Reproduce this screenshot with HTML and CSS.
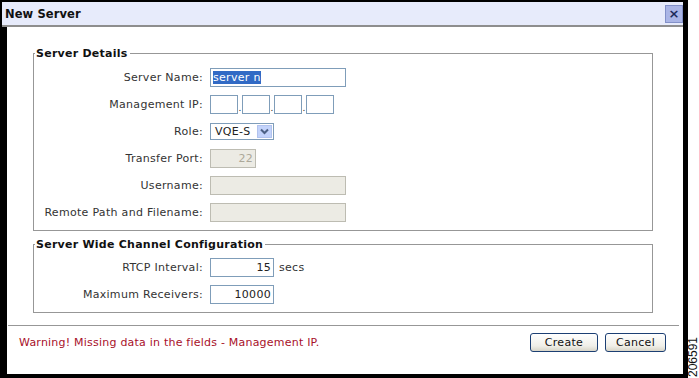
FILE: index.html
```html
<!DOCTYPE html>
<html lang="en">

<head>
    <meta charset="UTF-8">
    <title>New Server</title>
    <link rel="stylesheet" href="styles.css">
</head>

<body>
    <div class="dialog">
        <div class="titlebar">
            <span class="title">New Server</span>
            <span class="close-btn">&times;</span>
        </div>

        <div class="content">
            <!-- Server details -->
            <fieldset class="group details">
                <legend>Server Details</legend>
                <div class="form-grid">
                    <label>Server Name:</label>
                    <div class="field"><span class="input wide"><span class="selected">server n</span></span></div>

                    <label>Management IP:</label>
                    <div class="field ip">
                        <span class="input octet"></span><span class="dot">.</span>
                        <span class="input octet"></span><span class="dot">.</span>
                        <span class="input octet"></span><span class="dot">.</span>
                        <span class="input octet"></span>
                    </div>

                    <label>Role:</label>
                    <div class="field">
                        <span class="select">
                            <span class="select-value">VQE-S</span>
                            <span class="select-arrow">
                                <svg width="9" height="7" viewBox="0 0 9 7">
                                    <path d="M1 1.5 L4.5 5 L8 1.5" fill="none" stroke="#4d6185" stroke-width="2"/>
                                </svg>
                            </span>
                        </span>
                    </div>

                    <label>Transfer Port:</label>
                    <div class="field"><span class="input disabled port">22</span></div>

                    <label>Username:</label>
                    <div class="field"><span class="input disabled wide"></span></div>

                    <label>Remote Path and Filename:</label>
                    <div class="field"><span class="input disabled wide"></span></div>
                </div>
            </fieldset>

            <!-- Channel config -->
            <fieldset class="group channel">
                <legend>Server Wide Channel Configuration</legend>
                <div class="form-grid">
                    <label>RTCP Interval:</label>
                    <div class="field"><span class="input num">15</span><span class="unit">secs</span></div>

                    <label>Maximum Receivers:</label>
                    <div class="field"><span class="input num">10000</span></div>
                </div>
            </fieldset>

            <div class="separator"></div>

            <div class="footer">
                <span class="warning">Warning! Missing data in the fields - Management IP.</span>
                <div class="buttons">
                    <button class="btn create">Create</button>
                    <button class="btn cancel">Cancel</button>
                </div>
            </div>
        </div>
    </div>

    <div class="side-strip">
        <span class="fig-num">206591</span>
    </div>
</body>

</html>
```

FILE: styles.css
```css
body {
    margin: 0;
    padding: 0;
    background: white;
    font-family: "DejaVu Sans", Verdana, sans-serif;
    font-size: 11px;
    letter-spacing: 0.3px;
    color: #222;
    display: flex;
    width: 699px;
    height: 378px;
    overflow: hidden;
}

.dialog {
    width: 688px;
    height: 378px;
    box-sizing: border-box;
    border-style: solid;
    border-color: black;
    border-width: 2px 5px 4px 2px;
    display: flex;
    flex-direction: column;
    background: white;
}

.titlebar {
    height: 23px;
    background: #e7ebfb;
    border-bottom: 2px solid #8e8e8e;
    display: flex;
    justify-content: space-between;
    align-items: center;
    padding: 0 0 0 3px;
}

.titlebar .title {
    font-weight: bold;
    font-size: 11.5px;
    letter-spacing: 0.1px;
    color: #111;
}

.close-btn {
    width: 16px;
    height: 16px;
    background: #aab5e6;
    border: 1px solid #8290c8;
    color: #1d2a5a;
    font-weight: bold;
    font-size: 13px;
    line-height: 15px;
    letter-spacing: 0;
    text-align: center;
}

.content {
    flex: 1;
    border-left: 5px solid black;
    display: flex;
    flex-direction: column;
}

.group {
    margin: 0 30px 0 26px;
    padding: 7px 0 0 0;
    border: 1px solid #979797;
    min-width: 0;
}

.group legend {
    font-weight: bold;
    font-size: 11px;
    line-height: 13px;
    letter-spacing: 0.25px;
    padding: 0 2px 0 1px;
    margin-left: 1px;
    color: #111;
}

.details {
    margin-top: 20px;
    padding-top: 8px;
    padding-bottom: 8px;
}

.channel {
    margin-top: 7px;
    padding-bottom: 8px;
}

.form-grid {
    display: grid;
    grid-template-columns: 169px auto;
    column-gap: 7px;
    row-gap: 8px;
    align-items: center;
}

.form-grid label {
    text-align: right;
    color: #333;
}

.field {
    display: flex;
    align-items: center;
    height: 19px;
}

.input {
    display: inline-block;
    box-sizing: border-box;
    height: 19px;
    border: 1px solid #7f9db9;
    background: white;
    line-height: 17px;
    padding: 0 2px;
    color: #222;
}

.wide {
    width: 136px;
}

.selected {
    background: #316ac5;
    color: white;
}

.ip .octet {
    width: 28px;
}

.ip .dot {
    width: 4px;
    text-align: center;
    font-size: 9px;
    letter-spacing: 0;
    align-self: flex-end;
    line-height: 12px;
}

.select {
    display: flex;
    box-sizing: border-box;
    width: 64px;
    height: 17px;
    border: 1px solid #7f9db9;
    align-items: center;
}

.select-value {
    flex: 1;
    padding-left: 4px;
    line-height: 15px;
}

.select-arrow {
    width: 15px;
    height: 13px;
    margin-right: 1px;
    background: #c3d3fb;
    border: 1px solid #b2c3ee;
    box-sizing: border-box;
    display: flex;
    justify-content: center;
    align-items: center;
}

.disabled {
    background: #ecebe4;
    border-color: #bdbcb2;
    color: #aca899;
}

.port {
    width: 46px;
    text-align: right;
}

.num {
    width: 64px;
    text-align: right;
}

.unit {
    margin-left: 5px;
    color: #333;
}

.separator {
    height: 0;
    border-top: 1px solid #979797;
    margin: 12px 4px 0 1px;
}

.footer {
    display: flex;
    justify-content: space-between;
    align-items: center;
    padding: 7px 17px 0 12px;
}

.warning {
    color: #a8102a;
    letter-spacing: 0.22px;
}

.buttons {
    display: flex;
    gap: 7px;
}

.btn {
    height: 19px;
    box-sizing: border-box;
    border: 1px solid #1c3f73;
    border-radius: 3px;
    background: linear-gradient(to bottom, #ffffff, #f0efe8 70%, #d8d5c8);
    font-family: "DejaVu Sans", Verdana, sans-serif;
    font-size: 11px;
    letter-spacing: 0.3px;
    color: #111;
    padding: 0;
    line-height: 17px;
}

.create {
    width: 68px;
}

.cancel {
    width: 61px;
}

.side-strip {
    width: 11px;
    height: 378px;
    display: flex;
    align-items: flex-end;
    justify-content: center;
}

.fig-num {
    writing-mode: vertical-rl;
    transform: rotate(180deg);
    font-family: "Liberation Sans", Arial, sans-serif;
    font-size: 12px;
    letter-spacing: 0;
    color: #111;
    line-height: 11px;
    padding-top: 1px;
}
```
